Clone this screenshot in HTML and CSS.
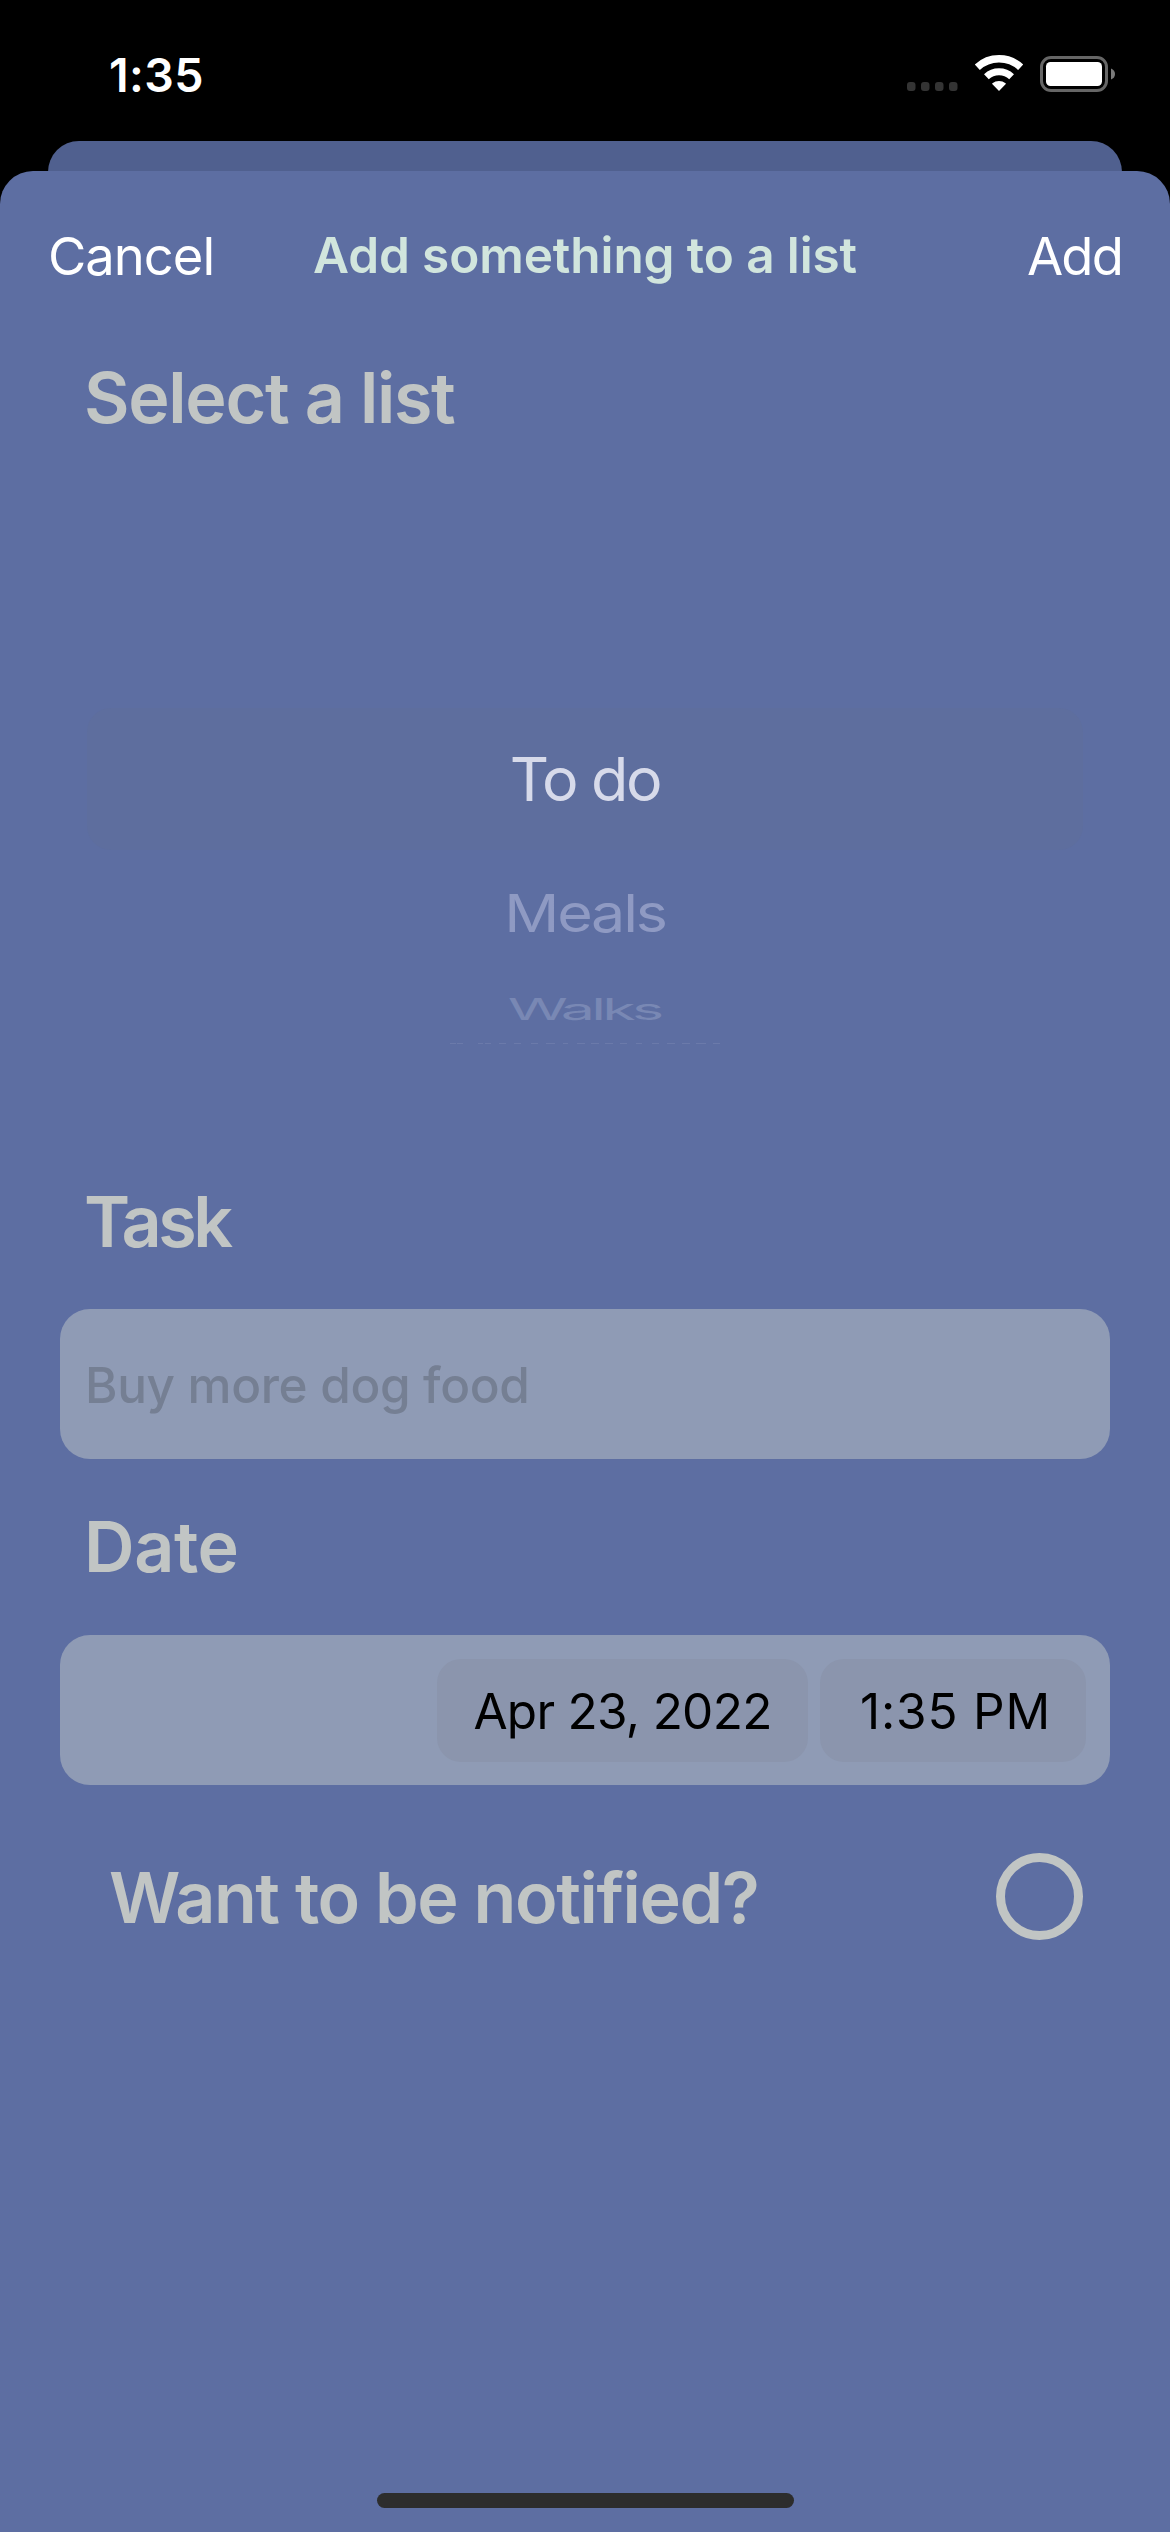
FILE: index.html
```html
<!DOCTYPE html>
<html lang="en">
<head>
  <meta charset="utf-8">
  <title>Add something to a list</title>
  <link rel="stylesheet" href="styles.css">
</head>
<body>
  <div class="screen">
    <header class="status">
      <time class="clock">1:35</time>
      <svg class="status-icons" viewBox="0 0 210 40" aria-hidden="true">
        <g fill="#343434">
          <rect x="2" y="29" width="8.5" height="9" rx="3"/>
          <rect x="16" y="29" width="8.5" height="9" rx="3"/>
          <rect x="30" y="29" width="8.5" height="9" rx="3"/>
          <rect x="44" y="29" width="8.5" height="9" rx="3"/>
        </g>
        <g fill="none" stroke="#fff">
          <path d="M72.3 14.3A32 32 0 0 1 115.7 14.3" stroke-width="7.4"/>
          <path d="M81.4 23.7A18.6 18.6 0 0 1 106.6 23.7" stroke-width="7"/>
        </g>
        <path d="M94 37.9L87.2 30.9Q87 30.5 87.4 30.2A10.6 10.6 0 0 1 100.6 30.2Q101 30.5 100.8 30.9Z" fill="#fff"/>
        <rect x="136.5" y="4.5" width="65" height="33" rx="9.5" fill="none" stroke="#666" stroke-width="3"/>
        <rect x="141" y="9" width="56" height="24" rx="4.5" fill="#fff"/>
        <path d="M206 15.5Q210 17 210 21T206 26.5Z" fill="#7a7a7a"/>
      </svg>
    </header>
    <div class="sheet-behind"></div>
    <main class="sheet">
      <nav class="nav">
        <button class="nav-button cancel">Cancel</button>
        <h1 class="title">Add something to a list</h1>
        <button class="nav-button add">Add</button>
      </nav>

      <h2 class="heading select">Select a list</h2>
      <div class="picker">
        <div class="option selected"><span>To do</span></div>
        <div class="option near"><span>Meals</span></div>
        <div class="option far"><span>Walks</span></div>
        <svg class="option-edge" viewBox="0 0 272 4" aria-hidden="true">
          <path d="M1 1.5h6M8 1.5h6M29 1.5h5M36 1.5h6M50 1.5h7M65 1.5h7M82 1.5h7M97 1.5h9M114 1.5h5M128 1.5h8M142 1.5h8M156 1.5h8M171 1.5h7M187 1.5h6M203 1.5h7M218 1.5h8M233 1.5h8M247 1.5h10M264 1.5h7"/>
        </svg>
      </div>

      <h2 class="heading task">Task</h2>
      <div class="field"><span class="placeholder">Buy more dog food</span></div>

      <h2 class="heading date">Date</h2>
      <div class="field date-field">
        <button class="pill day">Apr 23, 2022</button>
        <button class="pill hour">1:35 PM</button>
      </div>

      <div class="notify">
        <h2 class="question">Want to be notified?</h2>
        <span class="radio"></span>
      </div>
      <div class="home-bar"></div>
    </main>
  </div>
</body>
</html>
```
FILE: styles.css
```css
* {
  box-sizing: border-box;
}

body {
  margin: 0;
  background: #000;
  font-family: Inter, "Liberation Sans", sans-serif;
}

h1,
h2 {
  margin: 0;
  font-weight: 600;
}

button {
  padding: 0;
  border: 0;
  background: none;
  font: inherit;
}

.screen {
  display: flex;
  flex-direction: column;
  width: 1170px;
  height: 2532px;
  overflow: hidden;
}

.status {
  display: flex;
  flex: none;
  justify-content: space-between;
  height: 141px;
  padding: 53px 55px 0 109px;
}

.clock {
  color: #fff;
  font-size: 46.5px;
  font-weight: 600;
  line-height: 44px;
  letter-spacing: 0.4px;
}

.status-icons {
  width: 210px;
  height: 40px;
}

.sheet-behind {
  flex: none;
  height: 60px;
  margin: 0 48px -30px;
  border-radius: 31px 31px 0 0;
  background: #50608f;
}

.sheet {
  position: relative;
  display: flex;
  flex: 1;
  flex-direction: column;
  border-radius: 33px 33px 0 0;
  background: #5d6ea2;
}

.nav {
  display: grid;
  grid-template-columns: 1fr auto 1fr;
  align-items: center;
  height: 170px;
  padding: 0 48px;
}

.nav-button {
  color: #fff;
  font-size: 52.5px;
  line-height: 64px;
}

.cancel {
  justify-self: start;
  letter-spacing: -1px;
}

.add {
  justify-self: end;
  letter-spacing: -1.8px;
}

.title {
  padding-bottom: 2px;
  color: #d1e5dd;
  font-size: 49.5px;
  line-height: 60px;
  letter-spacing: -0.1px;
}

.heading,
.question {
  color: #c1c5c4;
  font-size: 70px;
  line-height: 86px;
  letter-spacing: -1.4px;
}

.heading {
  padding-left: 84px;
}

.select {
  margin-top: 14px;
  letter-spacing: -1.3px;
}

.picker {
  display: flex;
  flex-direction: column;
  align-items: center;
  height: 738px;
  padding-top: 267px;
}

.option {
  display: flex;
  align-items: center;
  justify-content: center;
  width: 996px;
  color: #fff;
  font-size: 61px;
}

.selected {
  height: 142px;
  border-radius: 24px;
  background: #5e6e9e;
  color: #d7daea;
  letter-spacing: -2.4px;
}

.near {
  height: 126px;
  color: #8f9ac3;
  letter-spacing: -2.2px;
}

.near span {
  transform: scaleY(0.86);
}

.far {
  height: 66px;
  padding-right: 2px;
  color: #7988b4;
  letter-spacing: -3.8px;
}

.far span {
  transform: scaleY(0.485);
}

.option-edge {
  width: 272px;
  height: 4px;
  fill: none;
  stroke: #6b7aaa;
  stroke-width: 1;
}

.task {
  letter-spacing: -3.5px;
}

.date {
  margin-top: 45px;
  letter-spacing: -0.4px;
}

.field {
  display: flex;
  align-items: center;
  height: 150px;
  margin: 44px 60px 0;
  padding: 0 24px;
  border-radius: 30px;
  background: #8f9bb5;
}

.date-field {
  justify-content: flex-end;
  gap: 12px;
  margin-top: 45px;
}

.placeholder {
  padding: 2px 0 0 1px;
  color: #757f93;
  font-size: 49.5px;
  font-weight: 500;
  letter-spacing: -0.35px;
}

.pill {
  height: 103px;
  padding-top: 1px;
  border-radius: 24px;
  background: #8b95ad;
  color: #000;
  font-size: 49.5px;
}

.day {
  width: 371px;
  letter-spacing: -0.7px;
}

.hour {
  width: 266px;
  padding-left: 5px;
  letter-spacing: 0.8px;
}

.notify {
  display: flex;
  align-items: center;
  justify-content: space-between;
  height: 88px;
  margin-top: 69px;
  padding: 0 87px 0 109px;
}

.radio {
  width: 87px;
  height: 87px;
  margin-bottom: 3px;
  border: 9px solid #c1c5c4;
  border-radius: 50%;
}

.home-bar {
  width: 417px;
  height: 15px;
  margin: auto auto 24px;
  border-radius: 8px;
  background: #2d2d2d;
}
```
